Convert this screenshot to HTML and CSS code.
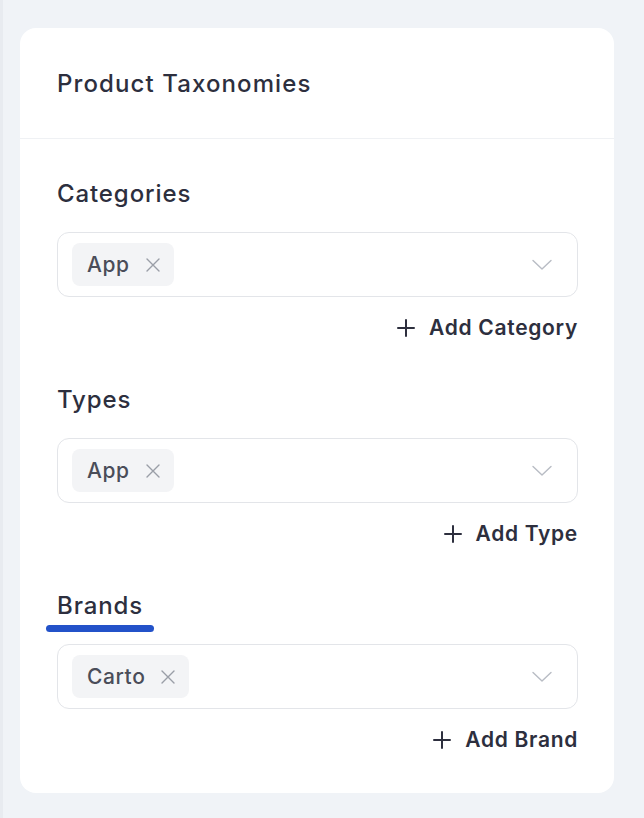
FILE: index.html
```html
<!DOCTYPE html>
<html lang="en">
<head>
<meta charset="utf-8">
<title>Product Taxonomies</title>
<link rel="stylesheet" href="styles.css">
</head>
<body>
<div class="page">
  <section class="card">
    <header class="card-header">
      <h2 class="card-title">Product Taxonomies</h2>
    </header>
    <div class="card-body">
      <div class="field">
        <label class="field-label">Categories</label>
        <div class="select">
          <span class="tag">App <svg class="tag-x" viewBox="0 0 14 14" width="14" height="14"><path d="M1 1L13 13M13 1L1 13" stroke="#9a9ea7" stroke-width="1.4" stroke-linecap="round"/></svg></span>
          <svg class="chevron" viewBox="0 0 20 12" width="20" height="12"><path d="M1 1.5 L10 10 L19 1.5" fill="none" stroke="#b8bcc4" stroke-width="1.4" stroke-linecap="round" stroke-linejoin="round"/></svg>
        </div>
        <div class="add-row"><button class="add-btn"><svg class="plus" viewBox="0 0 18 18" width="18" height="18"><path d="M9 1v16M1 9h16" stroke="#2d2f3e" stroke-width="2" stroke-linecap="round"/></svg>Add Category</button></div>
      </div>
      <div class="field">
        <label class="field-label">Types</label>
        <div class="select">
          <span class="tag">App <svg class="tag-x" viewBox="0 0 14 14" width="14" height="14"><path d="M1 1L13 13M13 1L1 13" stroke="#9a9ea7" stroke-width="1.4" stroke-linecap="round"/></svg></span>
          <svg class="chevron" viewBox="0 0 20 12" width="20" height="12"><path d="M1 1.5 L10 10 L19 1.5" fill="none" stroke="#b8bcc4" stroke-width="1.4" stroke-linecap="round" stroke-linejoin="round"/></svg>
        </div>
        <div class="add-row"><button class="add-btn"><svg class="plus" viewBox="0 0 18 18" width="18" height="18"><path d="M9 1v16M1 9h16" stroke="#2d2f3e" stroke-width="2" stroke-linecap="round"/></svg>Add Type</button></div>
      </div>
      <div class="field">
        <label class="field-label underlined">Brands</label>
        <div class="select">
          <span class="tag">Carto <svg class="tag-x" viewBox="0 0 14 14" width="14" height="14"><path d="M1 1L13 13M13 1L1 13" stroke="#9a9ea7" stroke-width="1.4" stroke-linecap="round"/></svg></span>
          <svg class="chevron" viewBox="0 0 20 12" width="20" height="12"><path d="M1 1.5 L10 10 L19 1.5" fill="none" stroke="#b8bcc4" stroke-width="1.4" stroke-linecap="round" stroke-linejoin="round"/></svg>
        </div>
        <div class="add-row"><button class="add-btn"><svg class="plus" viewBox="0 0 18 18" width="18" height="18"><path d="M9 1v16M1 9h16" stroke="#2d2f3e" stroke-width="2" stroke-linecap="round"/></svg>Add Brand</button></div>
      </div>
    </div>
  </section>
</div>
</body>
</html>
```
FILE: styles.css
```css
* { box-sizing: border-box; }
html, body {
  margin: 0;
  padding: 0;
  background: #f0f3f7;
  font-family: Inter, "Noto Sans", sans-serif;
  color: #2d2f3e;
}
.page {
  padding: 28px 30px 27px 17px;
  border-left: 3px solid #e8ebf0;
  min-height: 818px;
}
.card {
  background: #ffffff;
  border-radius: 16px;
  overflow: hidden;
}
.card-header {
  height: 111px;
  padding: 0 37px;
  display: flex;
  align-items: center;
  border-bottom: 1px solid #eff1f4;
}
.card-title {
  margin: 0;
  font-size: 24px;
  font-weight: 500;
  letter-spacing: 1.1px;
}
.card-body {
  padding: 40px 36px 39px 37px;
  display: flex;
  flex-direction: column;
  gap: 43px;
}
.field {
  display: flex;
  flex-direction: column;
}
.field-label {
  align-self: flex-start;
  font-size: 24px;
  font-weight: 500;
  letter-spacing: 0.9px;
  line-height: 30px;
  margin-bottom: 23px;
  position: relative;
}
.underlined::after {
  content: "";
  position: absolute;
  left: -11px;
  right: -11px;
  bottom: -11px;
  height: 7px;
  border-radius: 4px;
  background: #2352c9;
}
.select {
  height: 65px;
  border: 1px solid #e3e5e9;
  border-radius: 12px;
  display: flex;
  align-items: center;
  padding: 0 25px 0 14px;
}
.tag {
  display: inline-flex;
  align-items: center;
  height: 43px;
  padding: 0 14px 0 15px;
  background: #f3f4f6;
  border-radius: 8px;
  font-size: 21px;
  font-weight: 500;
  letter-spacing: 0.6px;
  color: #4a4d59;
  gap: 16px;
}
.tag-x { display: block; }
.chevron { margin-left: auto; }
.add-row {
  display: flex;
  justify-content: flex-end;
  margin-top: 17px;
}
.add-btn {
  background: none;
  border: 0;
  padding: 0;
  display: inline-flex;
  align-items: center;
  gap: 14px;
  font-family: inherit;
  font-size: 21px;
  font-weight: 600;
  letter-spacing: 0.7px;
  color: #2d2f3e;
  line-height: 28px;
}
```
